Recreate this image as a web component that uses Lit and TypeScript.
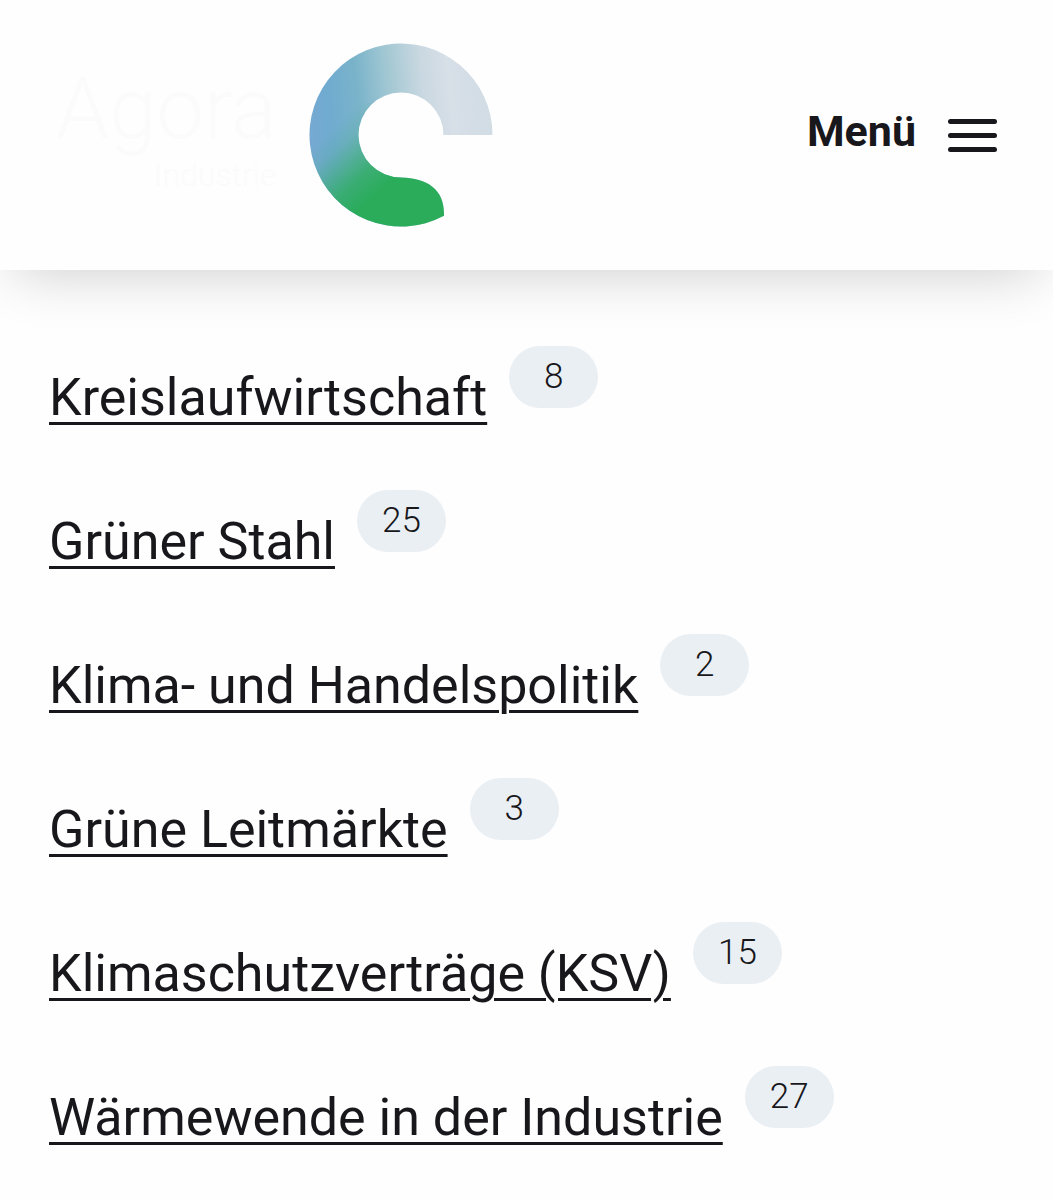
import { LitElement, html, css, svg } from "lit";
import { customElement, property } from "lit/decorators.js";

interface Topic {
  label: string;
  count: number;
}

const TOPICS: Topic[] = [
  { label: "Kreislaufwirtschaft", count: 8 },
  { label: "Grüner Stahl", count: 25 },
  { label: "Klima- und Handelspolitik", count: 2 },
  { label: "Grüne Leitmärkte", count: 3 },
  { label: "Klimaschutzverträge (KSV)", count: 15 },
  { label: "Wärmewende in der Industrie", count: 27 },
];

const ring = svg`
  <defs>
    <linearGradient id="sky" gradientUnits="userSpaceOnUse" x1="0" y1="92" x2="184" y2="74">
      <stop offset="0" stop-color="#76a9d3" />
      <stop offset="0.12" stop-color="#70abd0" />
      <stop offset="0.28" stop-color="#79b3ca" />
      <stop offset="0.46" stop-color="#a3c8d3" />
      <stop offset="0.64" stop-color="#cad8e1" />
      <stop offset="0.78" stop-color="#d7dfe7" />
      <stop offset="1" stop-color="#d1dce4" />
    </linearGradient>
    <linearGradient id="leaf" gradientUnits="userSpaceOnUse" x1="16" y1="92" x2="68" y2="150">
      <stop offset="0" stop-color="#2dac60" stop-opacity="0" />
      <stop offset="0.25" stop-color="#2dac60" stop-opacity="0.15" />
      <stop offset="0.7" stop-color="#2dac60" stop-opacity="0.82" />
      <stop offset="1" stop-color="#2aac5b" />
    </linearGradient>
    <path id="shape" d="M183.500 92 A91.500 91.500 0 1 0 135 172.800 C136 147 119 135 92 134.500 A42.500 42.500 0 1 1 134.500 92 Z" />
    <clipPath id="lower"><path d="M0 60 H70 V100 H140 V184 H0 Z" /></clipPath>
  </defs>
  <use href="#shape" fill="url(#sky)" />
  <g clip-path="url(#lower)"><use href="#shape" fill="url(#leaf)" /></g>
`;

@customElement("site-header")
export class SiteHeader extends LitElement {
  static styles = css`
    :host {
      display: block;
    }
    .header {
      display: flex;
      align-items: center;
      justify-content: space-between;
      padding: 43px 56px;
      background: #fefefe;
      box-shadow: 0 16px 54px -14px rgba(0, 0, 0, 0.2);
    }
    .brand {
      display: flex;
      align-items: center;
      gap: 32px;
      color: #fbfbfb;
      text-decoration: none;
    }
    .wordmark {
      display: flex;
      flex-direction: column;
      align-items: flex-end;
      font-weight: 300;
    }
    .name {
      font-size: 85px;
      line-height: 80px;
    }
    .field {
      font-size: 32px;
      line-height: 53px;
    }
    .ring {
      display: block;
      width: 184px;
      height: 184px;
    }
    .menu {
      display: flex;
      align-items: center;
      gap: 32px;
      padding: 0;
      border: 0;
      background: none;
      color: #18171b;
      font: 700 43px/56px Roboto, "Open Sans", sans-serif;
      cursor: pointer;
    }
    .label {
      padding-bottom: 8px;
    }
    .bars {
      display: block;
      width: 49px;
      height: 33px;
    }
  `;

  render() {
    return html`
      <header class="header">
        <a class="brand" href="#">
          <span class="wordmark">
            <span class="name">Agora</span>
            <span class="field">Industrie</span>
          </span>
          <svg class="ring" viewBox="0 0 184 184" aria-hidden="true">${ring}</svg>
        </a>
        <button class="menu" type="button">
          <span class="label">Menü</span>
          <svg class="bars" viewBox="0 0 49 33" aria-hidden="true">
            <g fill="#18171b">
              <rect width="49" height="5" rx="2.500" />
              <rect y="14" width="49" height="5" rx="2.500" />
              <rect y="28" width="49" height="5" rx="2.500" />
            </g>
          </svg>
        </button>
      </header>
    `;
  }
}

@customElement("topic-list")
export class TopicList extends LitElement {
  @property({ attribute: false }) topics: Topic[] = [];

  static styles = css`
    :host {
      display: block;
    }
    .list {
      display: flex;
      flex-direction: column;
      gap: 48px;
      margin: 0;
      padding: 76px 49px 32px;
      list-style: none;
    }
    .item {
      display: flex;
      align-items: flex-start;
      gap: 22px;
      min-height: 96px;
    }
    .link {
      padding-top: 16px;
      color: #18171b;
      font-size: 52px;
      line-height: 72px;
      text-decoration: underline;
      text-decoration-thickness: 3px;
      text-underline-offset: 7px;
    }
    .count {
      flex: none;
      box-sizing: border-box;
      width: 89px;
      height: 62px;
      border-radius: 31px;
      background: #eaeff4;
      color: #18171b;
      font-size: 35px;
      font-weight: 300;
      line-height: 61px;
      text-align: center;
    }
  `;

  render() {
    return html`
      <ul class="list">
        ${this.topics.map(
          (topic) => html`
            <li class="item">
              <a class="link" href="#">${topic.label}</a>
              <span class="count">${topic.count}</span>
            </li>
          `,
        )}
      </ul>
    `;
  }
}

@customElement("app-root")
export class AppRoot extends LitElement {
  static styles = css`
    :host {
      display: block;
      min-height: 100vh;
      background: #fefefe;
      font-family: Roboto, "Open Sans", sans-serif;
    }
  `;

  render() {
    return html`
      <site-header></site-header>
      <main><topic-list .topics=${TOPICS}></topic-list></main>
    `;
  }
}
